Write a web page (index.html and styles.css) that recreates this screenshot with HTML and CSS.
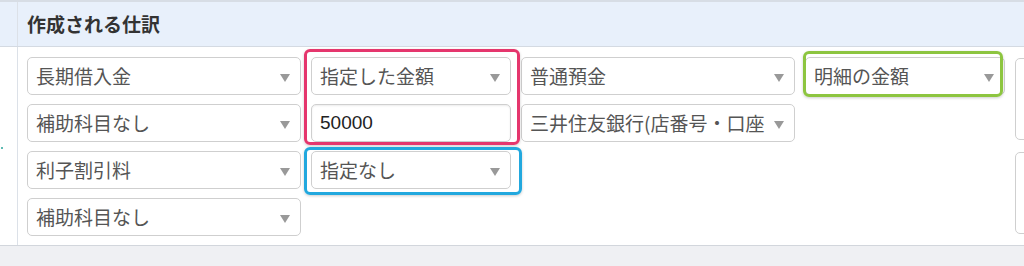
FILE: index.html
```html
<!DOCTYPE html>
<html lang="ja">
<head>
<meta charset="utf-8">
<title>作成される仕訳</title>
<link rel="stylesheet" href="styles.css">
</head>
<body>
<div class="table">
  <div class="thead">
    <div class="side"></div>
    <div class="title">作成される仕訳</div>
  </div>
  <div class="tbody">
    <div class="side"><span class="dot"></span></div>
    <div class="grid">
      <div class="sel c1 r1"><span class="t">長期借入金</span></div>
      <div class="sel c1 r2"><span class="t">補助科目なし</span></div>
      <div class="sel c1 r3"><span class="t">利子割引料</span></div>
      <div class="sel c1 r4"><span class="t">補助科目なし</span></div>

      <div class="grp hl red c2 r12">
        <div class="sel"><span class="t">指定した金額</span></div>
        <div class="inp">50000</div>
      </div>
      <div class="sel hl blue c2 r3"><span class="t">指定なし</span></div>

      <div class="sel c3 r1"><span class="t">普通預金</span></div>
      <div class="sel tight c3 r2"><span class="t">三井住友銀行(店番号・口座</span></div>

      <div class="sel hl green c4 r1"><span class="t">明細の金額</span></div>

      <div class="box c5 r12"></div>
      <div class="box c5 r34"></div>
    </div>
  </div>
</div>
</body>
</html>
```

FILE: styles.css
```css
html, body {
  margin: 0;
  overflow: hidden;
}
body {
  background: #eff0f3;
  font-family: "Noto Sans CJK JP", "Noto Sans", sans-serif;
}
.table {
  width: 1024px;
  border-top: 2px solid #d7dde5;
  border-bottom: 1px solid #d2d6dc;
  background: #fff;
  overflow: hidden;
}
.thead {
  display: flex;
  height: 44px;
  background: #e8f0fb;
  border-bottom: 1px solid #d4dae2;
}
.side {
  flex: none;
  width: 17px;
  border-right: 1px solid #dce1e8;
  position: relative;
}
.dot {
  position: absolute;
  left: 1px;
  top: 100px;
  width: 2px;
  height: 2px;
  background: #2aa59a;
  border-radius: 1px;
}
.title {
  display: flex;
  align-items: center;
  padding-left: 9px;
  font-size: 19px;
  font-weight: bold;
  color: #333;
  line-height: 1.5;
}
.tbody {
  display: flex;
  height: 198px;
}
.grid {
  display: grid;
  grid-template-columns: 274px 200px 274px 200px 200px;
  grid-template-rows: repeat(4, 38px);
  gap: 9px 10px;
  padding: 10px 0 9px 9px;
}
.c1 { grid-column: 1; }
.c2 { grid-column: 2; }
.c3 { grid-column: 3; }
.c4 { grid-column: 4; }
.c5 { grid-column: 5; }
.r1 { grid-row: 1; }
.r2 { grid-row: 2; }
.r3 { grid-row: 3; }
.r4 { grid-row: 4; }
.r12 { grid-row: 1 / span 2; }
.r34 { grid-row: 3 / span 2; }

.sel {
  position: relative;
  box-sizing: border-box;
  height: 38px;
  display: flex;
  align-items: center;
  padding: 0 26px 0 8px;
  border: 1px solid #cfcfcf;
  border-radius: 5px;
  background: #fff;
  font-size: 19px;
  line-height: 1.5;
  color: #555;
}
.sel.tight {
  padding-right: 20px;
}
.sel .t {
  flex: 1;
  min-width: 0;
  white-space: nowrap;
}
.sel::after {
  content: "";
  position: absolute;
  right: 10px;
  top: 50%;
  margin-top: -2px;
  border-left: 5px solid transparent;
  border-right: 5px solid transparent;
  border-top: 8px solid #999;
}
.inp {
  box-sizing: border-box;
  height: 38px;
  display: flex;
  align-items: center;
  padding: 0 8px;
  border: 1px solid #cfcfcf;
  border-radius: 5px;
  background: #fff;
  box-shadow: inset 0 1px 2px rgba(0, 0, 0, 0.08);
  font-family: "Liberation Sans", sans-serif;
  font-size: 19px;
  color: #222;
}
.grp {
  display: flex;
  flex-direction: column;
  gap: 9px;
}
.box {
  border: 1px solid #cfcfcf;
  border-radius: 5px;
  margin: 1px 0 2px;
}

.hl { position: relative; }
.hl::before {
  content: "";
  position: absolute;
  border: 3px solid;
  border-radius: 6px;
  box-shadow: 0 1px 3px rgba(0, 0, 0, 0.2);
  pointer-events: none;
  z-index: 2;
}
.red::before {
  border-color: #e5366d;
  top: -8px;
  left: -7px;
  right: -9px;
  bottom: -3px;
}
.blue::before {
  border-color: #22a8de;
  top: -5px;
  left: -8px;
  right: -12px;
  bottom: -7px;
}
.green::before {
  border-color: #8dc540;
  top: -7px;
  left: -3px;
  right: 1px;
  bottom: -3px;
}
```
